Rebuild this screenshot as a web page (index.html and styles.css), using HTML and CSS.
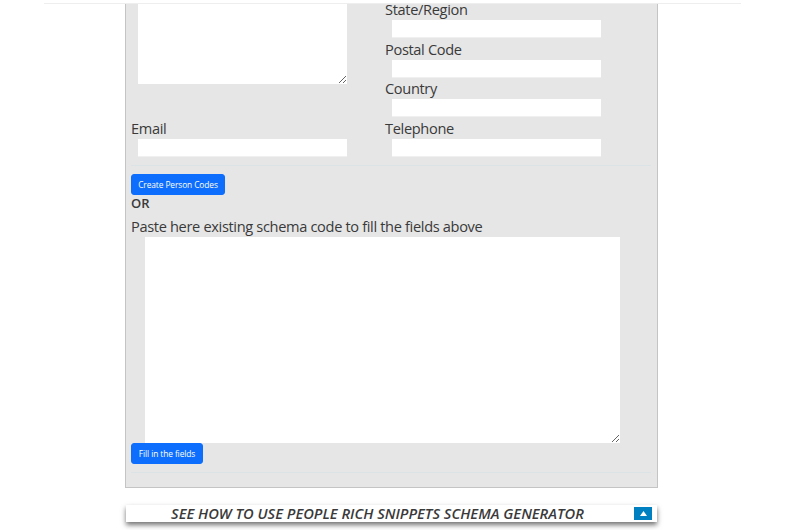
FILE: index.html
```html
<!DOCTYPE html>
<html lang="en">
<head>
<meta charset="utf-8">
<title>People Rich Snippets Schema Generator</title>
<link rel="stylesheet" href="styles.css">
</head>
<body>
<div class="page">
  <hr class="top-rule">
  <main class="panel">
    <div class="columns">
      <div class="col">
        <textarea class="field area-top"></textarea>
        <label class="group email-group">
          <span class="label">Email</span>
          <input class="field" type="text">
        </label>
      </div>
      <div class="col">
        <label class="group"><span class="label">State/Region</span><input class="field" type="text"></label>
        <label class="group"><span class="label">Postal Code</span><input class="field" type="text"></label>
        <label class="group"><span class="label">Country</span><input class="field" type="text"></label>
        <label class="group"><span class="label">Telephone</span><input class="field" type="text"></label>
      </div>
    </div>
    <hr class="rule">
    <button class="btn btn-create" type="button">Create Person Codes</button>
    <div class="or">OR</div>
    <div class="paste-label">Paste here existing schema code to fill the fields above</div>
    <textarea class="area-paste"></textarea>
    <button class="btn btn-fill" type="button">Fill in the fields</button>
    <hr class="rule rule-bottom">
  </main>
  <div class="howto">
    <span class="howto-title">SEE HOW TO USE PEOPLE RICH SNIPPETS SCHEMA GENERATOR</span>
    <span class="howto-toggle"><svg width="7" height="5" viewBox="0 0 7 5"><path d="M3.5 0 7 5H0z" fill="#fff"/></svg></span>
  </div>
</div>
</body>
</html>
```
FILE: styles.css
```css
* { box-sizing: border-box; }
html, body { margin: 0; padding: 0; background: #fff; }
body { font-family: "Open Sans", "Noto Sans", sans-serif; color: #3a3a3a; overflow: hidden; }
.page { width: 800px; height: 530px; padding-top: 3px; }
.top-rule { margin: 0 59px 0 44px; border: 0; border-top: 1px solid #eee; height: 0; }
.panel {
  margin-left: 125px; width: 533px; height: 484px;
  background: #e6e6e6; border: 1px solid #c4c4c4; border-top: 0;
  padding: 0 6px 0 5px;
}
.columns { display: flex; height: 161px; }
.col { width: 254px; display: flex; flex-direction: column; }
.group { display: block; height: 39.67px; }
.label { display: block; font-size: 14.6px; letter-spacing: -.34px; line-height: 10px; height: 16px; }
.field {
  display: block; width: 209px; height: 18px; margin-left: 7px;
  background: #fff; border: 0; border-bottom: 1px solid #f0f0f0; padding: 0; outline: 0;
}
.area-top { height: 80px; resize: both; border: 0; flex: none; }
.email-group { margin-top: 39px; }
.rule { margin: 0; border: 0; border-top: 1px solid #dce3e6; height: 0; }
.btn {
  display: block; background: #0d6efd; color: #fff; border: 1px solid #0d6efd;
  border-radius: 3px; font-family: inherit; font-size: 8.4px; letter-spacing: -.1px; line-height: 12px; padding: 0;
  height: 21px;
}
.btn-create { width: 94px; margin-top: 8px; }
.or { font-size: 13px; font-weight: 600; line-height: 16px; margin-top: 0; }
.paste-label { font-size: 14.6px; letter-spacing: -.34px; line-height: 16px; margin-top: 7px; }
.area-paste {
  display: block; width: 475px; height: 206px; margin: 3px 0 0 14px;
  background: #fff; border: 0; padding: 0; outline: 0; resize: both;
}
.btn-fill { width: 72px; }
.rule-bottom { margin-top: 8px; }
.howto {
  margin: 17px 0 0 126px; width: 531px; height: 17px; background: #fff;
  display: flex; align-items: center;
  box-shadow: 0 3px 5px rgba(0,0,0,.55);
}
.howto-title {
  width: 503px; text-align: center; font-family: "Open Sans", sans-serif;
  font-style: italic; font-weight: 600; font-size: 14.7px; line-height: 17px;
}
.howto-toggle {
  margin-left: 5px; width: 18px; height: 13px; background: #0080c0;
  display: flex; align-items: center; justify-content: center;
}
```
